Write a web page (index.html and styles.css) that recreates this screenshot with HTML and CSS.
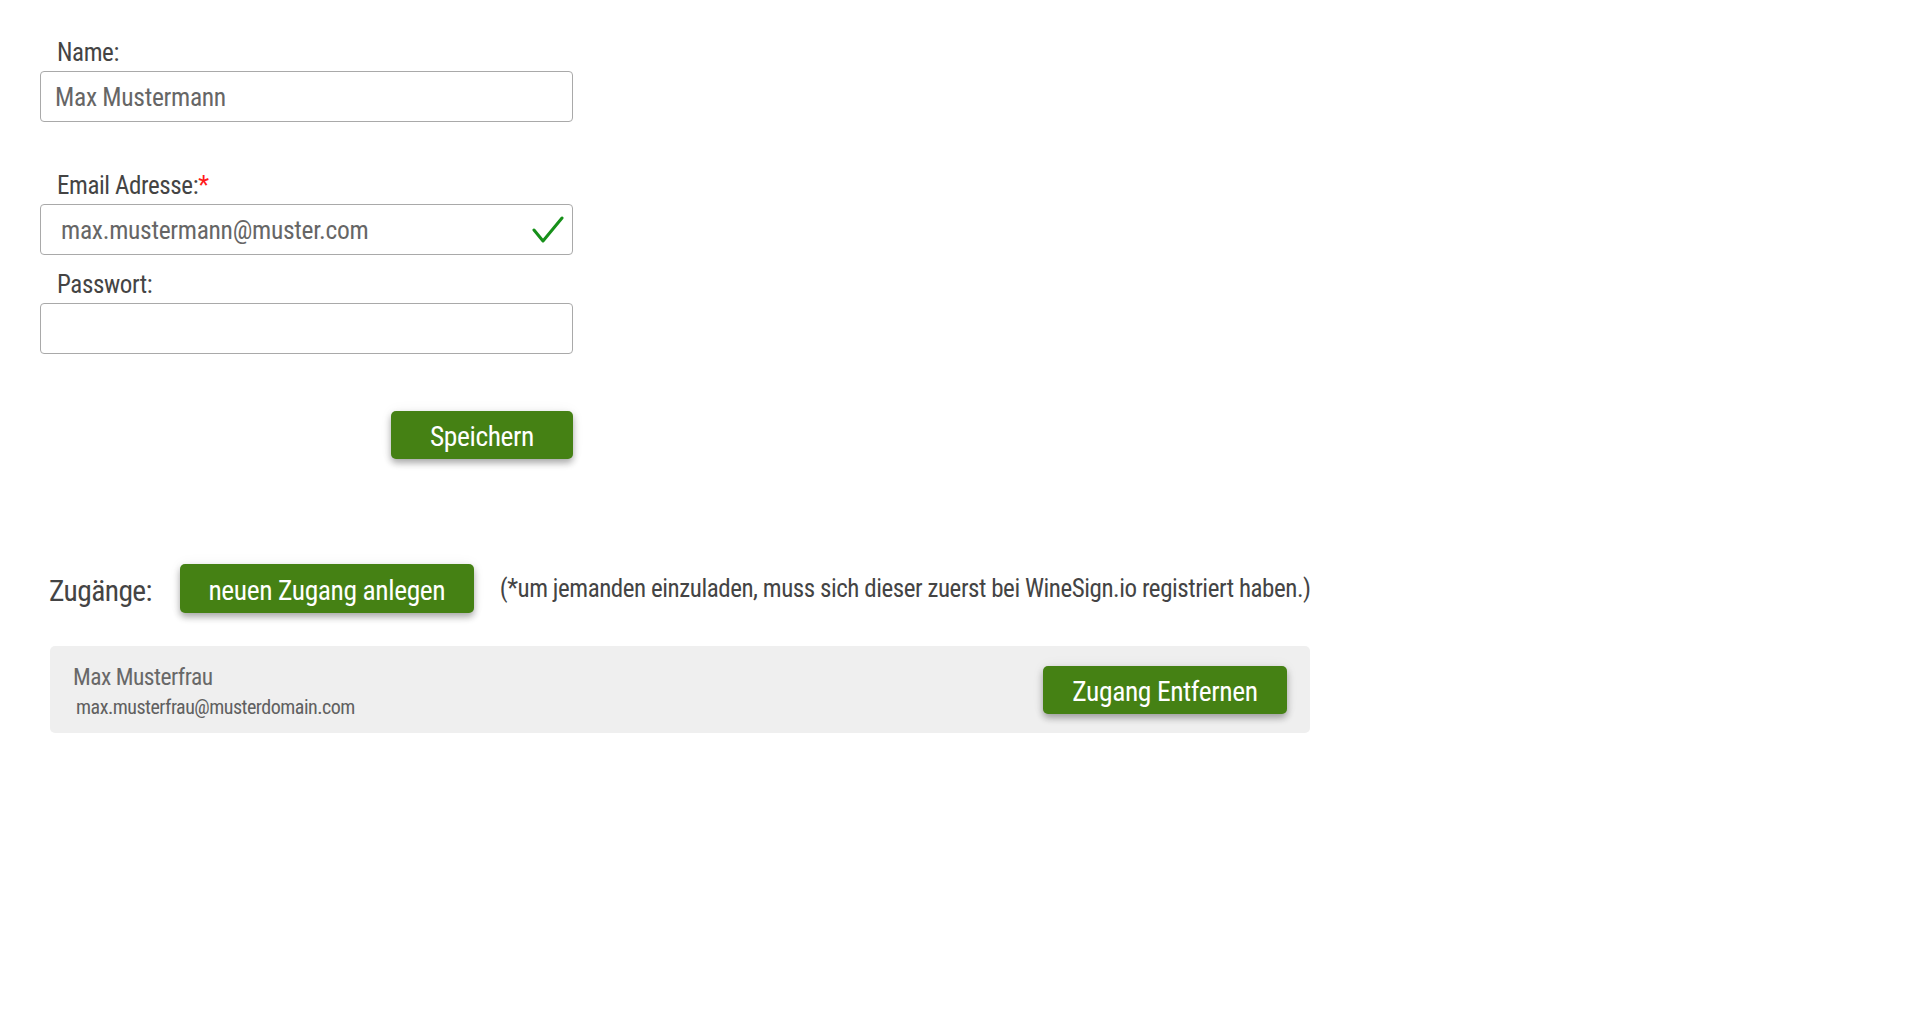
FILE: index.html
```html
<!DOCTYPE html>
<html lang="de">
<head>
<meta charset="utf-8">
<title>Profil</title>
<link rel="stylesheet" href="styles.css">
</head>
<body>
<div class="page">
  <form class="profile">
    <div class="field field-name">
      <label class="label" for="name">Name:</label>
      <div class="input-wrap">
        <input class="input" id="name" type="text" value="Max Mustermann">
      </div>
    </div>
    <div class="field field-email">
      <label class="label" for="email">Email Adresse:<span class="req">*</span></label>
      <div class="input-wrap">
        <input class="input input-email" id="email" type="text" value="max.mustermann@muster.com">
        <svg class="valid-icon" width="32" height="28" viewBox="0 0 32 28" aria-hidden="true">
          <polyline points="2,14 11,25 30,2" fill="none" stroke="#17901a" stroke-width="3" stroke-linecap="round" stroke-linejoin="round"/>
        </svg>
      </div>
    </div>
    <div class="field field-pass">
      <label class="label" for="pass">Passwort:</label>
      <div class="input-wrap">
        <input class="input" id="pass" type="password" value="">
      </div>
    </div>
    <button class="btn btn-save" type="button">Speichern</button>
  </form>

  <section class="access">
    <div class="access-head">
      <h2 class="access-title">Zugänge:</h2>
      <button class="btn btn-new" type="button">neuen Zugang anlegen</button>
      <p class="access-note">(*um jemanden einzuladen, muss sich dieser zuerst bei WineSign.io registriert haben.)</p>
    </div>
    <div class="access-item">
      <div class="access-user">
        <div class="access-name">Max Musterfrau</div>
        <div class="access-mail">max.musterfrau@musterdomain.com</div>
      </div>
      <button class="btn btn-remove" type="button">Zugang Entfernen</button>
    </div>
  </section>
</div>
</body>
</html>
```

FILE: styles.css
```css
* {
  box-sizing: border-box;
}

body {
  margin: 0;
  background: #ffffff;
  color: #444444;
  font-family: "Roboto Condensed", "Roboto", sans-serif;
}

.page {
  padding: 38px 0 0 40px;
}

.profile {
  width: 533px;
  display: flex;
  flex-direction: column;
}

.label {
  display: block;
  height: 30px;
  margin-bottom: 3px;
  padding-left: 17px;
  font-size: 25px;
  letter-spacing: -0.4px;
  line-height: 30px;
  color: #444444;
  white-space: nowrap;
}

.req {
  color: #ff1a1a;
}

.field-name {
  margin-bottom: 49px;
}

.field-email {
  margin-bottom: 15px;
}

.input-wrap {
  position: relative;
}

.input {
  display: block;
  width: 100%;
  height: 51px;
  margin: 0;
  padding: 1px 14px 0;
  border: 1px solid #a9a9a9;
  border-radius: 4px;
  background: #ffffff;
  font-family: inherit;
  font-size: 25.5px;
  letter-spacing: -0.3px;
  color: #666666;
  outline: none;
}

.input-email {
  padding-left: 20px;
}

.valid-icon {
  position: absolute;
  right: 9px;
  top: 12px;
}

.btn {
  flex-shrink: 0;
  border: none;
  border-radius: 5px;
  background: #458114;
  color: #ffffff;
  font-family: inherit;
  font-size: 27.5px;
  letter-spacing: -0.4px;
  height: 48px;
  padding: 3px 0 0;
  cursor: pointer;
  white-space: nowrap;
  box-shadow: 0 4px 7px rgba(0, 0, 0, 0.32), 0 0 14px rgba(0, 0, 0, 0.05);
}

.btn-save {
  align-self: flex-end;
  width: 182px;
  margin-top: 57px;
}

.access {
  margin: 105px 0 0 10px;
}

.access-head {
  display: flex;
  align-items: center;
  height: 49px;
}

.access-title {
  flex-shrink: 0;
  margin: 4px 28px 0 -1px;
  font-size: 29.5px;
  letter-spacing: -0.6px;
  font-weight: normal;
  color: #444444;
  white-space: nowrap;
}

.btn-new {
  width: 294px;
  height: 49px;
}

.access-note {
  flex-shrink: 0;
  margin: 0 0 0 26px;
  font-size: 25px;
  letter-spacing: -0.45px;
  color: #444444;
  white-space: nowrap;
}

.access-item {
  width: 1260px;
  margin-top: 33px;
  height: 87px;
  padding: 0 23px;
  display: flex;
  align-items: center;
  justify-content: space-between;
  background: #efefef;
  border-radius: 5px;
}

.access-user {
  padding-top: 4px;
}

.access-name {
  font-size: 23.5px;
  letter-spacing: -0.5px;
  line-height: 28px;
  color: #686868;
}

.access-mail {
  margin-top: 2px;
  padding-left: 3px;
  font-size: 20px;
  letter-spacing: -0.5px;
  line-height: 28px;
  color: #606060;
}

.btn-remove {
  width: 244px;
  margin-top: 1px;
}
```
